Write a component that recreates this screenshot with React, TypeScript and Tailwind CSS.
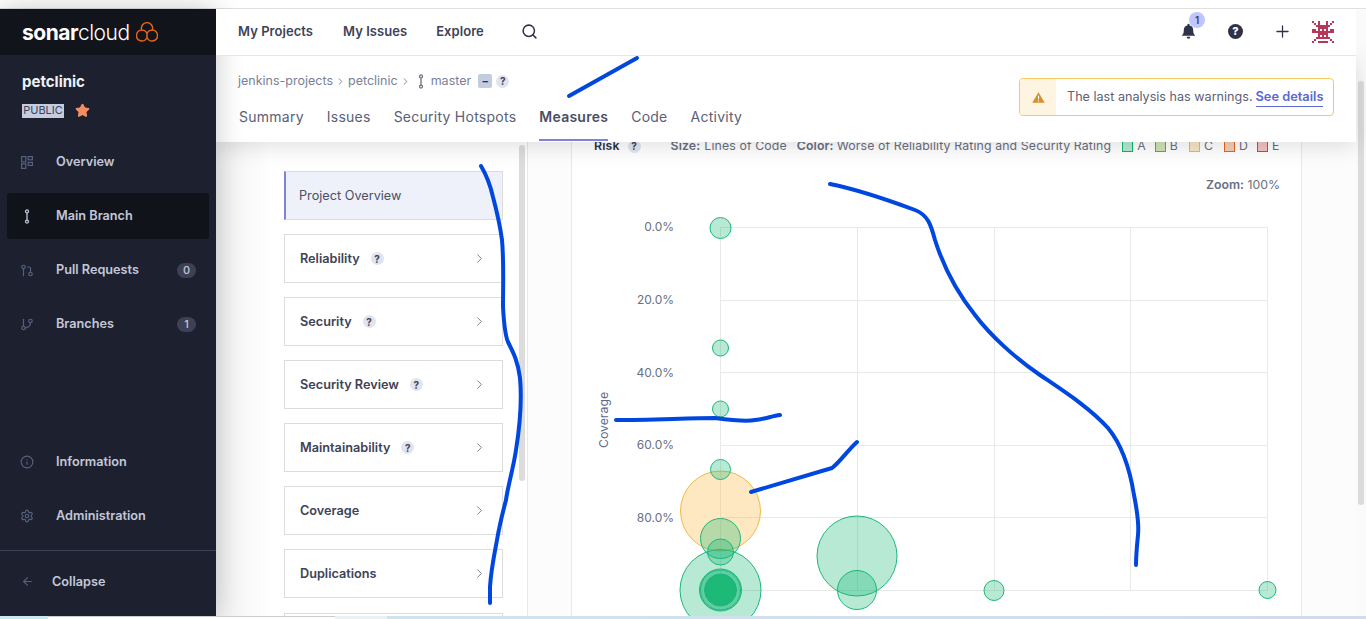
import { ArrowLeft, ChevronRight, GitBranch, GitPullRequest, Info, Plus, Search, Settings, Star } from "lucide-react";

function BranchIcon({ className }: { className?: string }) {
  return (
    <svg viewBox="0 0 10 16" width="10" height="15" fill="none" stroke="currentColor" strokeWidth="1.4" className={className}>
      <circle cx="5" cy="2.6" r="1.6" />
      <circle cx="5" cy="13.4" r="1.6" />
      <path d="M5 4.2v7.6" />
    </svg>
  );
}

function OverviewIcon() {
  return (
    <svg viewBox="0 0 12 13" width="12" height="13" fill="none" stroke="#56607f" strokeWidth="1.2">
      <rect x="0.6" y="0.6" width="4.2" height="5.2" />
      <rect x="7.2" y="0.6" width="4.2" height="3.2" />
      <rect x="0.6" y="7.8" width="4.2" height="4.6" />
      <rect x="7.2" y="6.4" width="4.2" height="3" />
    </svg>
  );
}

function Help({ className = "" }: { className?: string }) {
  return (
    <span className={`flex h-[13px] w-[13px] items-center justify-center rounded-full bg-[#e1e4ef] text-[10px] font-bold leading-none text-[#3e4357] ${className}`}>
      ?
    </span>
  );
}

function SideItem({ icon, label, count, active }: { icon: React.ReactNode; label: string; count?: string; active?: boolean }) {
  return (
    <div className={`mx-[7px] flex h-[46px] items-center rounded-[3px] pl-[13px] pr-[13px] ${active ? "bg-[#11131b]" : ""}`}>
      <span className="flex w-[14px] justify-center">{icon}</span>
      <span className="ml-[22px] flex-1 text-[12.7px] font-semibold text-[#c3c7d9]">{label}</span>
      {count && (
        <span className="flex h-[15px] min-w-[19px] items-center justify-center rounded-full bg-[#3c4155] px-[5px] text-[11px] font-medium text-[#c3c7d9]">
          {count}
        </span>
      )}
    </div>
  );
}

function Sidebar() {
  return (
    <aside className="relative z-20 flex w-[216px] shrink-0 flex-col bg-[#1d212f] shadow-[0_0_26px_rgba(0,0,0,0.22)]">
      <div className="flex h-[46px] shrink-0 items-center bg-[#12141c] pl-[22px]">
        <span className="text-[21px] leading-none tracking-[-0.5px] text-white">
          <span className="font-bold">sonar</span>
          <span className="font-light">cloud</span>
        </span>
        <svg viewBox="0 0 22 20" width="22" height="20" fill="none" stroke="#e8661a" strokeWidth="1.4" className="ml-[6px]">
          <path d="M5.71 8.1A5.6 5.6 0 1 1 16.29 8.1A5.4 5.4 0 1 1 11 15.37A5.4 5.4 0 1 1 5.71 8.1Z" />
          <path d="M5.71 8.1A5.4 5.4 0 0 1 11 11.83L11 15.37M16.29 8.1A5.4 5.4 0 0 0 11 11.83" />
        </svg>
      </div>
      <div className="pl-[22px] pt-[17px]">
        <div className="text-[15px] font-bold leading-[20px] text-[#f0f1f6]">petclinic</div>
        <div className="mt-[11px] flex items-center">
          <span className="flex h-[14px] w-[42px] items-center justify-center bg-[#c5cce0] text-[11px] leading-none text-[#3e4357]">PUBLIC</span>
          <Star size={15} fill="#f18f63" stroke="#f18f63" className="ml-[11px]" />
        </div>
      </div>
      <div className="mt-[21px] flex flex-col gap-[8px]">
        <SideItem icon={<OverviewIcon />} label="Overview" />
        <SideItem icon={<BranchIcon className="text-[#c3c7d9]" />} label="Main Branch" active />
        <SideItem icon={<GitPullRequest size={15} className="text-[#56607f]" />} label="Pull Requests" count="0" />
        <SideItem icon={<GitBranch size={15} className="text-[#56607f]" />} label="Branches" count="1" />
      </div>
      <div className="mt-auto flex flex-col gap-[8px]">
        <SideItem icon={<Info size={16} className="text-[#56607f]" />} label="Information" />
        <SideItem icon={<Settings size={16} className="text-[#56607f]" />} label="Administration" />
      </div>
      <div className="mt-[11px] flex h-[66px] items-center border-t border-[#3c4155] pb-[4px] pl-[21px]">
        <ArrowLeft size={13} className="text-[#56607f]" />
        <span className="ml-[18px] text-[12.7px] font-semibold text-[#c3c7d9]">Collapse</span>
      </div>
    </aside>
  );
}

function Alien() {
  // pixel avatar, 11 x 11 grid
  const rows = [
    "x..x...x..x",
    ".x.x...x.x.",
    "..xxxxxxx..",
    "...xxxxx...",
    "xx.x.x.x.xx",
    "xxxxxxxxxxx",
    "...xxxxx...",
    "...x.x.x...",
    "..xxxxxxx..",
    ".x.......x.",
    "x..xxxxx..x",
  ];
  return (
    <svg viewBox="0 0 11 11" width="22" height="22" fill="#b8365a" shapeRendering="crispEdges">
      {rows.map((row, y) =>
        row.split("").map((c, x) => (c === "x" ? <rect key={`${x}-${y}`} x={x} y={y} width="1" height="1" /> : null))
      )}
    </svg>
  );
}

function TopNav() {
  return (
    <header className="relative z-30 flex h-[47px] shrink-0 items-center border-b border-[#e6e6e6] bg-white pb-[1px] pl-[22px] pr-[22px] text-[13px] font-semibold tracking-[0.05px] text-[#3e4357]">
      <span>My Projects</span>
      <span className="ml-[30px]">My Issues</span>
      <span className="ml-[29px]">Explore</span>
      <Search size={17} strokeWidth={2.2} className="ml-[37px] text-[#2f3349]" />
      <div className="relative ml-auto flex items-center">
        <svg viewBox="0 0 16 18" width="15" height="17" fill="#2f3349">
          <path d="M8 0.8a1.2 1.2 0 0 1 1.2 1.2v.5A5 5 0 0 1 13 7.4c0 3.6 1 4.8 2.2 6H.8C2 12.2 3 11 3 7.4a5 5 0 0 1 3.8-4.9V2A1.2 1.2 0 0 1 8 .8ZM6 14.6h4a2 2 0 0 1-4 0Z" />
        </svg>
        <span className="absolute left-[8px] top-[-9px] flex h-[16px] w-[16px] items-center justify-center rounded-full bg-[#bfc6ff] text-[10px] font-semibold leading-none tracking-normal text-[#3e4357]">1</span>
        <span className="ml-[32px] flex h-[15px] w-[15px] items-center justify-center rounded-full bg-[#2f3349] text-[11px] font-extrabold leading-none tracking-normal text-white">?</span>
        <Plus size={19} strokeWidth={1.6} className="ml-[30px] text-[#2f3349]" />
        <span className="ml-[20px] flex"><Alien /></span>
      </div>
    </header>
  );
}

function ProjectHeader() {
  const tabs = ["Summary", "Issues", "Security Hotspots", "Measures", "Code", "Activity"];
  return (
    <div className="relative z-10 flex h-[86px] shrink-0 bg-white pl-[22px] pr-[22px] shadow-[0_4px_22px_rgba(0,0,0,0.13)]">
      <div className="flex-1">
        <div className="mt-[15px] flex h-[20px] items-center text-[12.5px] text-[#7a8099]">
          <span>jenkins-projects</span>
          <ChevronRight size={11} className="mx-[2px]" />
          <span>petclinic</span>
          <ChevronRight size={11} className="mx-[2px]" />
          <BranchIcon className="ml-[3px] text-[#6a6f82]" />
          <span className="ml-[5px]">master</span>
          <span className="ml-[7px] flex h-[14px] w-[14px] items-center justify-center rounded-[2px] bg-[#c5cce0] text-[11px] font-bold leading-none text-[#2f3349]">–</span>
          <Help className="ml-[4px]" />
        </div>
        <nav className="mt-[15px] flex gap-[23px] pl-[1px] text-[14px] tracking-[0.25px] text-[#5b6075]">
          {tabs.map((tab) => (
            <span
              key={tab}
              className={`h-[35px] leading-[21px] ${tab === "Measures" ? "border-b-2 border-[#7c83d8] font-semibold text-[#4a4f63]" : ""}`}
            >
              {tab}
            </span>
          ))}
        </nav>
      </div>
      <div className="mt-[22px] flex h-[38px] w-[315px] items-stretch overflow-hidden rounded-[4px] border border-[#f5c95e]">
        <div className="flex w-[36px] items-center justify-center bg-[#fdf5e2]">
          <svg viewBox="0 0 14 12" width="13" height="11">
            <path d="M7 0.4 13.8 11.8H.2Z" fill="#d4922a" />
            <path d="M6.4 4h1.2v4H6.4ZM6.4 9h1.2v1.3H6.4Z" fill="#fff" />
          </svg>
        </div>
        <div className="flex flex-1 items-center pl-[11px] text-[12.6px] text-[#5c6175]">
          <span>The last analysis has warnings.</span>
          <span className="ml-[3px] border-b border-[#5a68d2] text-[12.8px] font-semibold leading-[18px] text-[#5a68d2]">See details</span>
        </div>
      </div>
    </div>
  );
}

function MeasureCard({ label, help = true }: { label: string; help?: boolean }) {
  return (
    <div className="flex h-[49px] shrink-0 items-center border border-[#dcdcdc] bg-white pl-[15px] pr-[15px] text-[12.7px] font-semibold text-[#3e4357]">
      <span>{label}</span>
      {help && <Help className="ml-[11px]" />}
      <ChevronRight size={15} strokeWidth={1.4} className="ml-auto text-[#6a6f82]" />
    </div>
  );
}

function MeasureList() {
  return (
    <div className="flex w-[312px] shrink-0 overflow-hidden border-r border-[#e6e7f0] bg-white">
      <div className="w-[54px] shrink-0 bg-gradient-to-r from-[#f1f1f1] to-white" />
      <div className="ml-[14px] flex w-[219px] shrink-0 flex-col gap-[14px] pt-[29px]">
        <div className="flex h-[49px] shrink-0 items-center border border-l-2 border-[#dcdcdc] border-l-[#7c83d8] bg-[#eef1f9] pl-[13px] text-[12.7px] text-[#4a4f63]">
          Project Overview
        </div>
        <MeasureCard label="Reliability" />
        <MeasureCard label="Security" />
        <MeasureCard label="Security Review" />
        <MeasureCard label="Maintainability" />
        <MeasureCard label="Coverage" help={false} />
        <MeasureCard label="Duplications" help={false} />
        {/* next card, only its top edge is on screen */}
        <div className="mt-px h-[49px] shrink-0 border border-[#dcdcdc] bg-white" />
      </div>
      <div className="ml-[16px] mt-[3px] h-[336px] w-[6px] shrink-0 rounded-[3px] bg-[#dcdcdc]" />
    </div>
  );
}

const legend = [
  { label: "A", swatch: "border-[#10b56f] bg-[#b6e7d0]", gap: "ml-[11px]" },
  { label: "B", swatch: "border-[#6fa82e] bg-[#cfe3b4]", gap: "ml-[9px]" },
  { label: "C", swatch: "border-[#eeb75a] bg-[#f8e6c4]", gap: "ml-[11px]" },
  { label: "D", swatch: "border-[#e8641b] bg-[#f6cdb4]", gap: "ml-[11px]" },
  { label: "E", swatch: "border-[#d9423f] bg-[#f3c2c0]", gap: "ml-[9px]" },
];

const gridX = [720, 857, 994, 1130, 1267];
const gridY = [227, 300, 372, 445, 517, 590];
const ticks = [
  { label: "0.0%", y: 227 },
  { label: "20.0%", y: 300 },
  { label: "40.0%", y: 373 },
  { label: "60.0%", y: 445 },
  { label: "80.0%", y: 518 },
];

const bubbles = [
  { x: 720.5, y: 511, r: 40, orange: true },
  { x: 720.5, y: 228, r: 10.5 },
  { x: 720.5, y: 348, r: 8 },
  { x: 720.5, y: 409, r: 8 },
  { x: 720.5, y: 469.5, r: 10 },
  { x: 720.5, y: 538.5, r: 20 },
  { x: 720.5, y: 552, r: 13 },
  { x: 720.5, y: 590, r: 40.5 },
  { x: 720.5, y: 590, r: 21 },
  { x: 720.5, y: 590, r: 20 },
  { x: 720.5, y: 590, r: 16 },
  { x: 720.5, y: 590, r: 15.5 },
  { x: 720.5, y: 590, r: 15 },
  { x: 720.5, y: 590, r: 14 },
  { x: 720.5, y: 590, r: 13 },
  { x: 857, y: 556, r: 40 },
  { x: 857, y: 590, r: 19.5 },
  { x: 994, y: 590.5, r: 10 },
  { x: 1267.5, y: 590, r: 8.5 },
];

function BubbleChart() {
  return (
    <svg viewBox="572 193 729 423" width="729" height="423" className="block shrink-0">
      <g stroke="#e9e9e9" strokeWidth="1" shapeRendering="crispEdges">
        {gridX.map((x) => (
          <line key={x} x1={x + 0.5} y1={227} x2={x + 0.5} y2={590} />
        ))}
        {gridY.map((y) => (
          <line key={y} x1={720} y1={y + 0.5} x2={1268} y2={y + 0.5} />
        ))}
      </g>
      {ticks.map((t) => (
        <text key={t.label} x={674} y={t.y + 4} textAnchor="end" fontSize="12" fill="#6a6f82">
          {t.label}
        </text>
      ))}
      <text x={0} y={0} transform="translate(608 420) rotate(-90)" textAnchor="middle" fontSize="12.3" fill="#5d6a8c">
        Coverage
      </text>
      {bubbles.map((b, i) => (
        <circle
          key={i}
          cx={b.x}
          cy={b.y}
          r={b.r}
          fill={b.orange ? "#f9b233" : "#10b56f"}
          fillOpacity="0.3"
          stroke={b.orange ? "#f5b840" : "#1cb87a"}
          strokeWidth="1"
        />
      ))}
    </svg>
  );
}

function ChartPanel() {
  return (
    <div className="ml-[43px] flex w-[731px] shrink-0 flex-col border-x border-[#e6e7f0] bg-white">
      <div className="-mt-[4px] flex h-[16px] shrink-0 items-center whitespace-nowrap pl-[22px] text-[12.3px] tracking-[0.13px] text-[#6a6f82]">
        <span className="font-semibold text-[#2f3349]">Risk</span>
        <Help className="ml-[8px]" />
        <span className="ml-[30px] font-semibold">Size:</span>
        <span className="ml-[4px]">Lines of Code</span>
        <span className="ml-[10px] font-semibold">Color:</span>
        <span className="ml-[3px]">Worse of Reliability Rating and Security Rating</span>
        {legend.map((l) => (
          <span key={l.label} className={`flex items-center ${l.gap}`}>
            <span className={`h-[11px] w-[11px] border ${l.swatch}`} />
            <span className="ml-[4px]">{l.label}</span>
          </span>
        ))}
      </div>
      <div className="mt-[23px] h-[16px] shrink-0 pr-[21px] text-right text-[12.3px] leading-[16px] text-[#6a6f82]">
        <span className="font-semibold">Zoom:</span> 100%
      </div>
      <BubbleChart />
    </div>
  );
}

// the blue pen marks someone drew over the screenshot
function Scribbles() {
  const marks = [
    "M569 96 L637 58",
    "M481 166 C487 176 490 184 493 197 C497 212 500 225 502 240 C504 262 503 285 503 307 C504 325 505 335 508 342 C514 354 518 362 520 378 C522 400 520 425 516 450 C513 470 508 485 506 500 C502 515 499 528 497 540 C494 556 491 570 490 587 L490 603",
    "M830 184 C850 188 880 197 915 210 C928 215 931 225 935 240 C942 262 955 290 975 315 C990 335 1015 358 1040 375 C1065 392 1090 408 1108 428 C1122 445 1130 470 1134 495 C1137 510 1139 525 1138 535 C1137 545 1136 555 1136 565",
    "M616 420 C650 420 690 418 715 418 C730 420 745 422 755 420 C765 419 772 416 780 415",
    "M751 492 L832 468 C840 462 848 450 857 442",
  ];
  return (
    <svg viewBox="0 0 1366 619" width="1366" height="619" fill="none" stroke="#0047e0" strokeWidth="4" strokeLinecap="round" strokeLinejoin="round" className="pointer-events-none absolute left-0 top-0 z-50">
      {marks.map((d) => (
        <path key={d} d={d} />
      ))}
    </svg>
  );
}

export default function App() {
  return (
    <div className="relative flex h-[619px] w-[1366px] flex-col overflow-hidden bg-white font-['Inter',sans-serif]">
      <div className="h-[9px] shrink-0 border-b border-[#e0e0e0] bg-white" />
      <div className="flex min-h-0 flex-1">
        <Sidebar />
        <div className="flex w-[1140px] shrink-0 flex-col">
          <TopNav />
          <ProjectHeader />
          <div className="flex min-h-0 flex-1 bg-[#fcfcfc]">
            <MeasureList />
            <ChartPanel />
          </div>
        </div>
        <div className="flex-1 bg-[#fafafa] pl-[2px] pt-[72px]">
          <div className="h-[424px] w-[6px] rounded-b-[3px] rounded-t-[3px] bg-[#dcdcdc]" />
        </div>
      </div>
      <div className="relative z-40 flex h-[3px] shrink-0">
        <div className="w-[48px] bg-[#c9e8f0]" />
        <div className="w-[287px] border-t border-[#cccccc] bg-white" />
        <div className="w-[52px] bg-[#e6f2f6]" />
        <div className="flex-1 bg-gradient-to-r from-[#cfe3ee] to-[#d0dcec]" />
      </div>
      <Scribbles />
    </div>
  );
}
